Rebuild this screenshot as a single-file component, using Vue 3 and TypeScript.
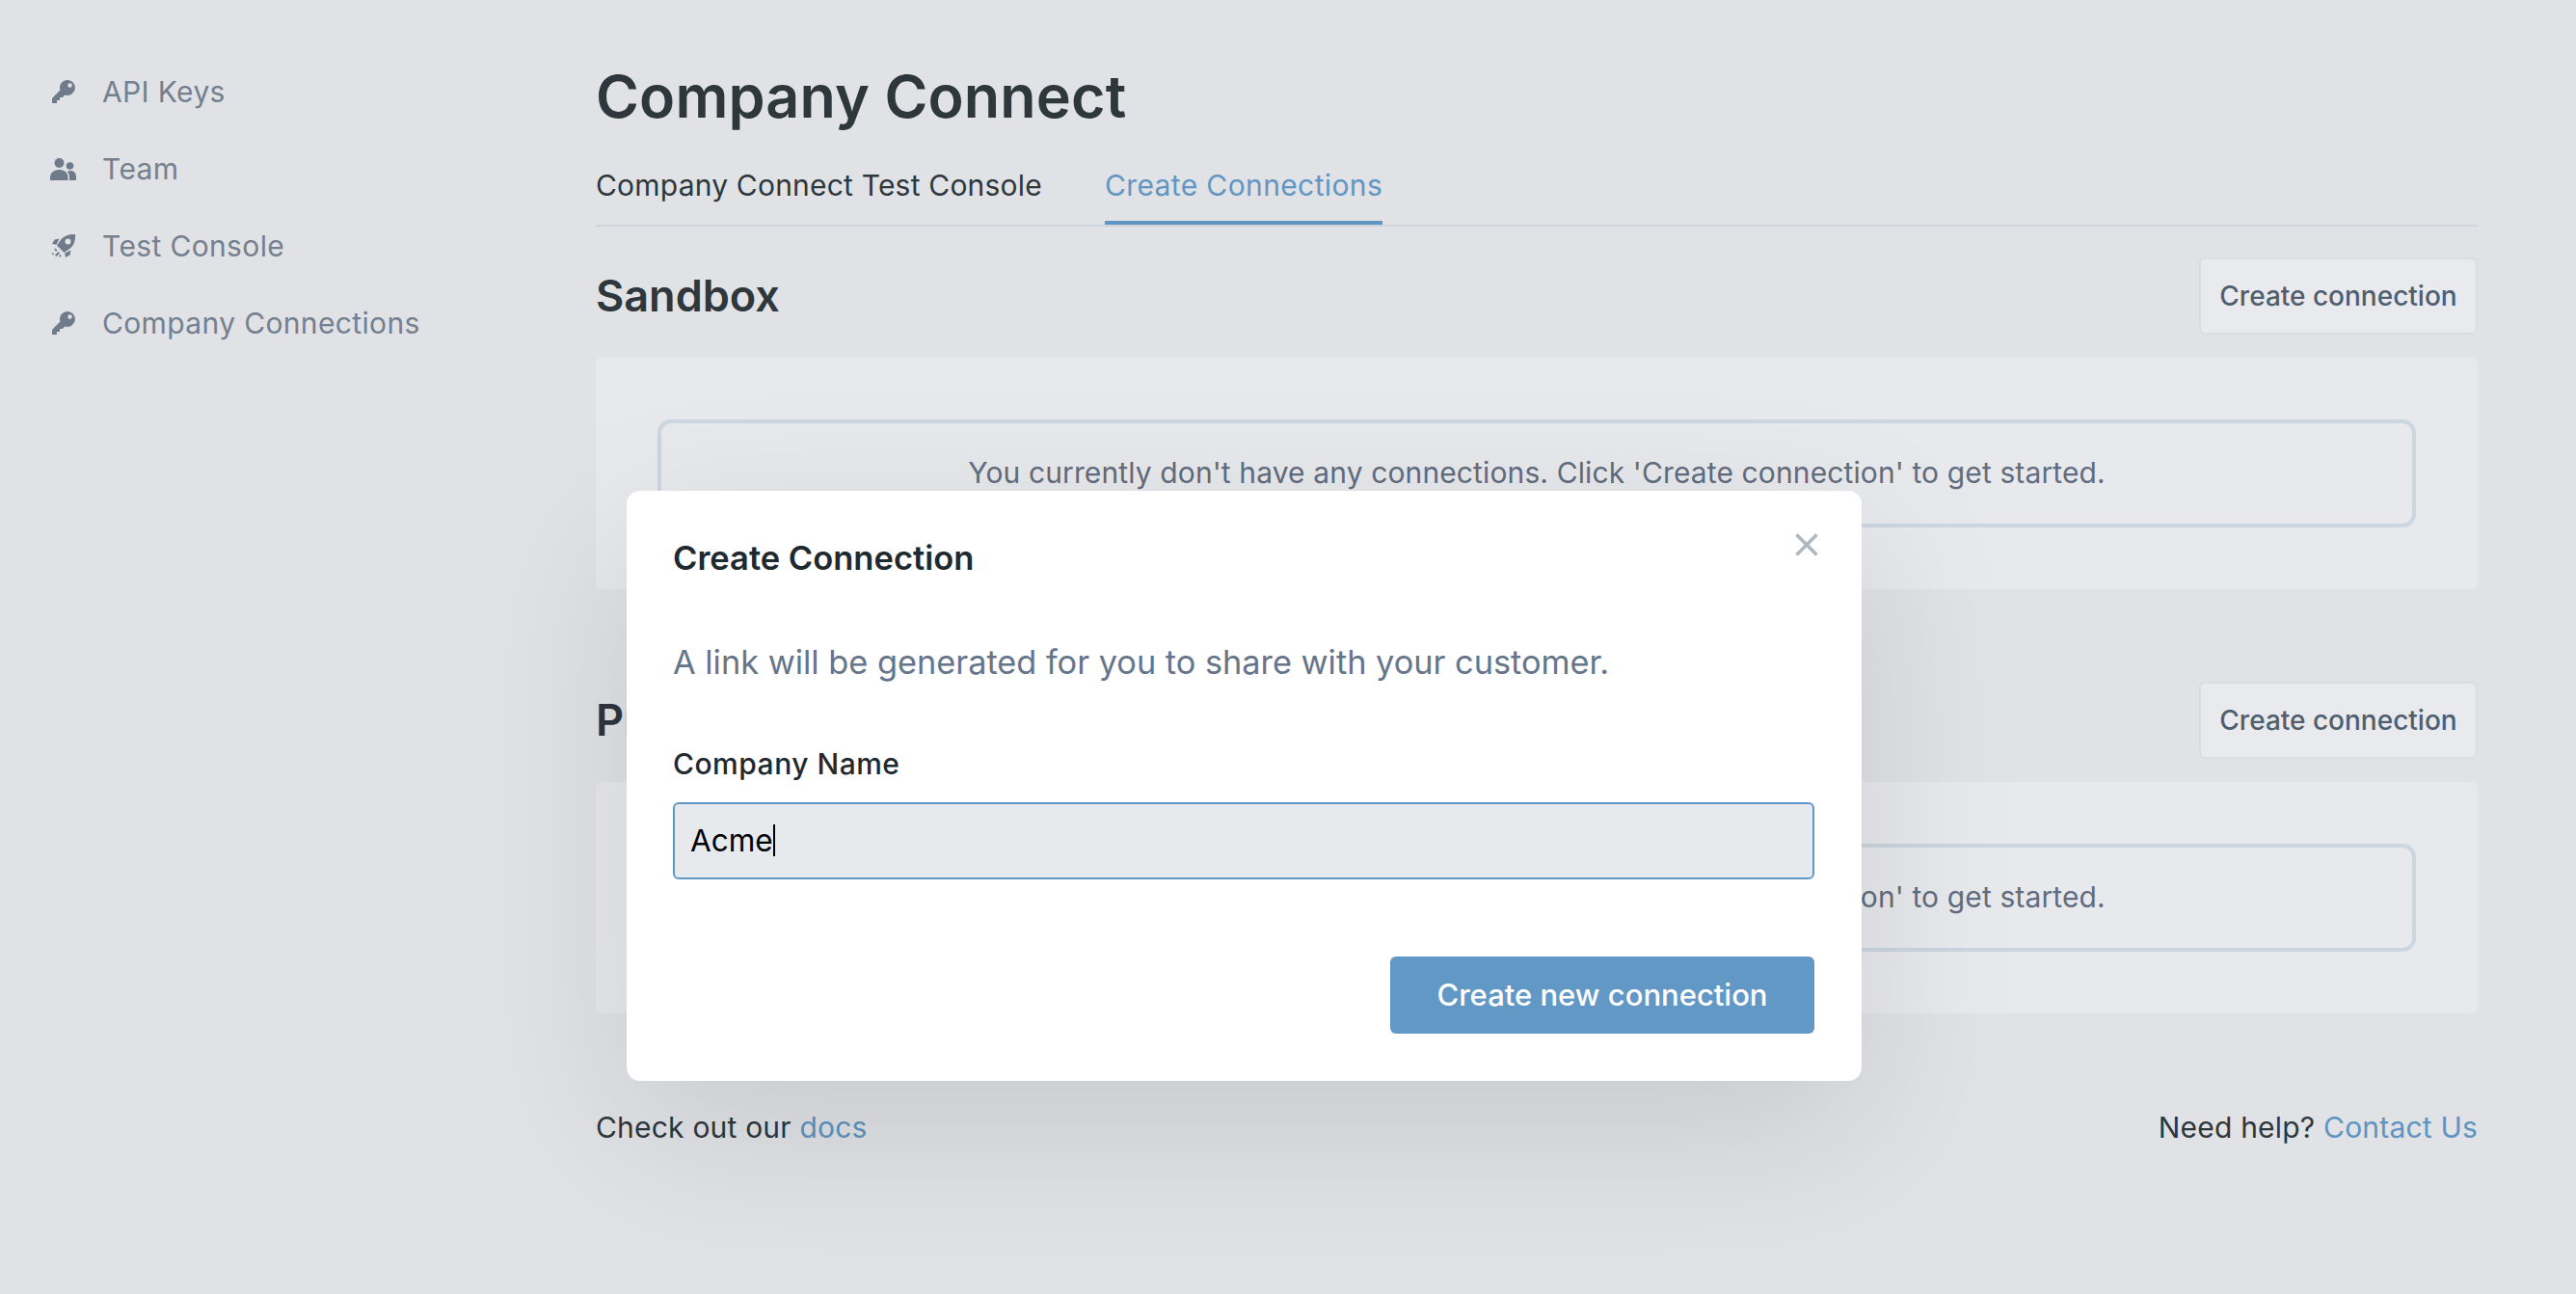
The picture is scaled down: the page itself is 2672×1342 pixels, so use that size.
<template>
  <div class="page">
    <aside class="sidebar">
      <a v-for="item in navItems" :key="item.label" class="nav-item">
        <svg v-if="item.icon === 'key'" class="nav-icon" viewBox="0 0 28 28">
          <path
            fill-rule="evenodd"
            d="M18 2a8 8 0 1 1-2.600 15.600L13 20h-3v3H7v3H2v-5l8.400-8.400A8 8 0 0 1 18 2zM20.500 5.200a2.300 2.300 0 1 0 0 4.600 2.300 2.300 0 0 0 0-4.600z"
          />
        </svg>
        <svg v-else-if="item.icon === 'team'" class="nav-icon" viewBox="0 0 28 28">
          <circle cx="9.500" cy="8" r="5" />
          <circle cx="20.500" cy="11" r="3.800" />
          <path d="M0 26v-3.500C0 18 4.500 15 9.500 15s9 3 9 7.500V26z" />
          <path d="M20 26v-3.500c0-2.200-.8-4.200-2.200-5.600 1-.6 2-.9 3.200-.9 3.800 0 6 2.500 6 6V26z" />
        </svg>
        <svg v-else class="nav-icon" viewBox="0 0 28 28">
          <path
            fill-rule="evenodd"
            d="M26 2c.6 5.500-1 10.500-4.500 14L14.500 21 7 13.500 12 6.500C15.500 3 20.500 1.400 26 2zM18.500 6.500a3 3 0 1 0 0 6 3 3 0 0 0 0-6z"
          />
          <path d="M9.500 6.500 4.500 7.500 2 12l4.500.8zM21.500 18.500 20.500 23.500 16 26l-.8-4.500z" />
          <path d="M5.500 16.500l2 2-1.300 1.300-2-2zM8.500 20l1.500 1.500-3.500 3.500-1.500-1.500zM3 21l1.200 1.200L3 23.400l-1.200-1.200zM10.500 23l1.200 1.200-1.500 1.500L9 24.500z" />
        </svg>
        <span>{{ item.label }}</span>
      </a>
    </aside>

    <main class="content">
      <h1 class="title">Company Connect</h1>
      <nav class="tabs">
        <span class="tab">Company Connect Test Console</span>
        <span class="tab active">Create Connections</span>
      </nav>

      <section v-for="env in environments" :key="env" class="env">
        <header class="env-head">
          <h2>{{ env }}</h2>
          <button class="outline-btn">Create connection</button>
        </header>
        <div class="panel">
          <div class="empty">
            You currently don't have any connections. Click 'Create connection' to get started.
          </div>
        </div>
      </section>

      <footer class="foot">
        <span>Check out our <a class="link">docs</a></span>
        <span>Need help? <a class="link">Contact Us</a></span>
      </footer>
    </main>

    <div class="modal">
      <div class="modal-head">
        <h3>Create Connection</h3>
        <svg class="close" viewBox="0 0 24 24">
          <path d="M1.500 1.500l21 21M22.500 1.500l-21 21" />
        </svg>
      </div>
      <p class="modal-text">A link will be generated for you to share with your customer.</p>
      <label class="field-label">Company Name</label>
      <div class="field"><span>{{ companyName }}</span><i class="caret"></i></div>
      <div class="modal-foot">
        <button class="primary-btn">Create new connection</button>
      </div>
    </div>
  </div>
</template>

<script setup lang="ts">
import { ref } from 'vue'

const navItems = [
  { label: 'API Keys', icon: 'key' },
  { label: 'Team', icon: 'team' },
  { label: 'Test Console', icon: 'rocket' },
  { label: 'Company Connections', icon: 'key' }
]

const environments = ['Sandbox', 'Production']
const companyName = ref('Acme')
</script>

<style>
html,
body {
  margin: 0;
  background: #e0e2e6;
}
</style>

<style scoped>
.page {
  position: relative;
  display: flex;
  height: 1342px;
  overflow: hidden;
  background: #e0e2e6;
  font-family: Inter, "Noto Sans", sans-serif;
}

.sidebar {
  width: 618px;
  flex-shrink: 0;
  box-sizing: border-box;
  padding: 55px 0 0 52px;
}

.nav-item {
  display: flex;
  align-items: center;
  gap: 26px;
  height: 80px;
  font-size: 30px;
  letter-spacing: 0.36px;
  color: #75808e;
}

.nav-icon {
  width: 28px;
  height: 28px;
  fill: #6f7b8a;
}

.content {
  width: 1952px;
  padding-top: 60px;
}

.title {
  margin: 0;
  font-size: 61px;
  line-height: 80px;
  font-weight: 600;
  letter-spacing: 0.15px;
  color: #2e373c;
}

.tabs {
  display: flex;
  gap: 65px;
  margin-top: 32px;
  border-bottom: 2px solid #cdd4dc;
}

.tab {
  padding-bottom: 17px;
  border-bottom: 4px solid transparent;
  font-size: 30px;
  line-height: 40px;
  letter-spacing: 0.2px;
  color: #2e373c;
}

.tab.active {
  letter-spacing: 0.38px;
  color: #6296c2;
  border-bottom-color: #6296c2;
}

.env-head {
  display: flex;
  align-items: center;
  justify-content: space-between;
  margin-top: 32px;
}

.env + .env .env-head {
  margin-top: 96px;
}

.env-head h2 {
  margin: 0 0 2px;
  font-size: 45px;
  font-weight: 600;
  color: #2e373c;
}

.outline-btn {
  width: 289px;
  height: 80px;
  padding-bottom: 2px;
  border: 2px solid #d9dce1;
  border-radius: 6px;
  background: #e9eaed;
  font: 500 28px Inter, sans-serif;
  color: #505e6f;
}

.panel {
  margin-top: 24px;
  padding: 64px;
  border-radius: 6px;
  background: #e8e9ec;
}

.empty {
  display: flex;
  align-items: center;
  justify-content: center;
  height: 101px;
  padding-bottom: 3px;
  border: 4px solid #ccd6e0;
  border-radius: 14px;
  font-size: 30px;
  letter-spacing: 0.12px;
  color: #616d7e;
}

.foot {
  display: flex;
  justify-content: space-between;
  margin-top: 98px;
  font-size: 30px;
  line-height: 40px;
  letter-spacing: 0.2px;
  color: #2e373c;
}

.link {
  color: #5f94c0;
}

.modal {
  position: absolute;
  left: 650px;
  top: 509px;
  width: 1281px;
  height: 612px;
  box-sizing: border-box;
  padding: 47px 49px 0 48px;
  border-radius: 14px;
  background: #fff;
  box-shadow: 0 50px 170px rgba(0, 0, 0, 0.115);
}

.modal-head {
  display: flex;
  justify-content: space-between;
}

.modal-head h3 {
  margin: 0;
  font-size: 34.500px;
  line-height: 46px;
  font-weight: 600;
  color: #1f2a30;
}

.close {
  width: 24px;
  height: 24px;
  margin-top: -3px;
  margin-right: -4px;
  stroke: #b0b8bd;
  stroke-width: 3.500;
}

.modal-text {
  margin: 62px 0 0;
  font-size: 34.300px;
  line-height: 46px;
  color: #66758a;
}

.field-label {
  display: block;
  margin-top: 62px;
  font-size: 30px;
  line-height: 40px;
  font-weight: 500;
  letter-spacing: 0.5px;
  color: #1f2a30;
}

.field {
  display: flex;
  align-items: center;
  height: 80px;
  box-sizing: border-box;
  margin-top: 20px;
  padding: 0 0 2px 16px;
  border: 2px solid #6098c8;
  border-radius: 6px;
  background: #e6eaed;
  font-size: 31.500px;
  color: #000;
}

.caret {
  width: 2px;
  height: 33px;
  background: #000;
}

.modal-foot {
  display: flex;
  justify-content: flex-end;
  margin-top: 80px;
}

.primary-btn {
  width: 440px;
  height: 80px;
  padding-bottom: 3px;
  border: 0;
  border-radius: 6px;
  background: #6298c6;
  font: 500 31px Inter, sans-serif;
  color: #fff;
}
</style>
